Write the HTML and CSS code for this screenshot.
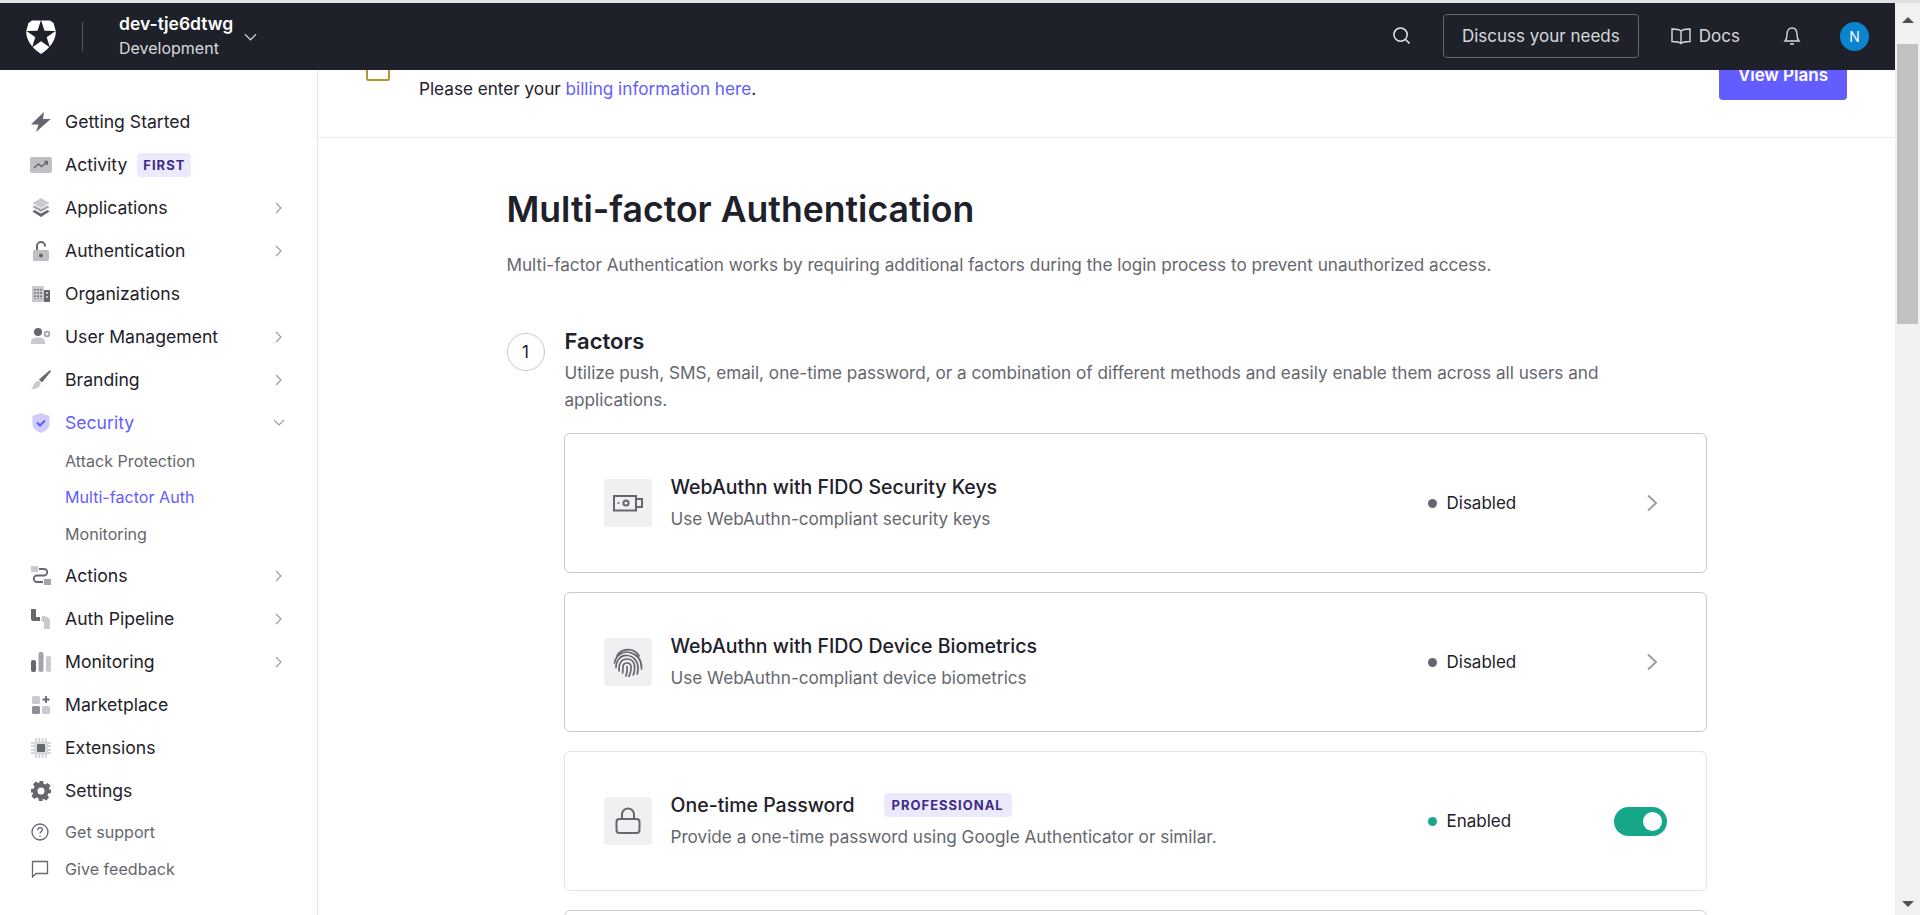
FILE: index.html
```html
<!DOCTYPE html>
<html lang="en">
<head>
<meta charset="utf-8">
<title>Multi-factor Authentication</title>
<link rel="stylesheet" href="styles.css">
</head>
<body>
<div class="top-strip"></div>
<div class="frame">
  <div class="app">
    <header class="topbar">
      <div class="tenant">
        <svg class="logo" viewBox="0 0 30 34" aria-hidden="true"><path fill="#fff" d="M6 .5H24L27.500 3l2 7C31 17 26 27 15 34 4 27-1 17 .5 10l2-7z"/><path fill="#1e212a" d="M15 0l3.500 10.800 11 .1-8.800 6.400 3.300 10.300L15 21.300l-9 6.300 3.300-10.300-8.800-6.400 11-.1z"/></svg>
        <span class="tenant-divider"></span>
        <div class="tenant-text">
          <div class="tenant-name">dev-tje6dtwg</div>
          <div class="tenant-env">Development</div>
        </div>
        <svg class="tenant-chevron" viewBox="0 0 14 8" aria-hidden="true"><path d="M1 1l6 6 6-6"/></svg>
      </div>
      <div class="top-actions">
        <svg class="search" viewBox="0 0 20 20" aria-hidden="true"><circle cx="9" cy="9" r="7"/><path d="M14 14l4.500 4.500"/></svg>
        <span class="discuss">Discuss your needs</span>
        <span class="docs">
          <svg class="book" viewBox="0 0 20 18" aria-hidden="true"><path d="M10 4C8.500 2.500 6 2 1 2v12.500c5 0 7.500.5 9 2 1.500-1.500 4-2 9-2V2c-5 0-7.500.5-9 2zM10 4v12.500"/></svg>
          Docs
        </span>
        <svg class="bell" viewBox="0 0 18 20" aria-hidden="true"><path d="M2 15c1.500-1.500 2-3 2-6.500C4 4.500 6 2 9 2s5 2.500 5 6.500c0 3.500.5 5 2 6.500zM7 18h4"/></svg>
        <span class="avatar">N</span>
      </div>
    </header>
    <div class="body-row">
      <nav class="sidebar">
        <a class="nav-row"><svg class="nav-icon" viewBox="0 0 20 20"><path fill="#65676e" d="M13 0L2 10.500l-2 2h7.500L5 20l13-11.500 2-1.500h-8z"/></svg><span>Getting Started</span></a>
        <a class="nav-row"><svg class="nav-icon wide" viewBox="0 0 22 16"><rect width="22" height="16" rx="2" fill="#bfc0c4"/><path d="M4 11l4.500-4 3 2.500L17 5M14 4.500h3.200V8" fill="none" stroke="#65676e" stroke-width="1.500"/></svg><span>Activity</span><b class="badge">FIRST</b></a>
        <a class="nav-row"><svg class="nav-icon" viewBox="0 0 20 20"><path fill="#c9cace" d="M10 0l8.500 5L10 10 1.500 5z"/><path fill="#a3a5aa" d="M3.500 7.500L10 11l6.500-3.500 2 1.500L10 14 1.500 9z"/><path fill="#65676e" d="M3.500 12L10 15.500l6.500-3.500 2 1.500L10 19l-8.500-5.500z"/></svg><span>Applications</span><svg class="caret" viewBox="0 0 8 12"><path d="M1 1l5 5-5 5"/></svg></a>
        <a class="nav-row"><svg class="nav-icon" viewBox="0 0 20 20"><path fill="none" stroke="#65676e" stroke-width="2" d="M6 9V5a4 4 0 0 1 8 0v.500"/><rect x="2" y="9" width="16" height="11" rx="1.500" fill="#bfc0c4"/><circle cx="10" cy="14.500" r="2" fill="#65676e"/></svg><span>Authentication</span><svg class="caret" viewBox="0 0 8 12"><path d="M1 1l5 5-5 5"/></svg></a>
        <a class="nav-row"><svg class="nav-icon" viewBox="0 0 20 20"><rect x="1" y="2" width="12" height="16" rx="1" fill="#c9cace"/><rect x="13" y="6" width="6" height="12" rx="1" fill="#65676e"/><path stroke="#65676e" stroke-width="1.600" stroke-dasharray="1.600 1.600" d="M4 5v10M7 5v10M10 5v10"/><path stroke="#d8d9dc" stroke-width="1.600" stroke-dasharray="2 2" d="M16 8v8"/></svg><span>Organizations</span></a>
        <a class="nav-row"><svg class="nav-icon" viewBox="0 0 20 20"><circle cx="7" cy="5" r="4" fill="#65676e"/><path fill="#c9cace" d="M0 17v-2c0-2.500 2.500-4.500 6-4.500h2c3.500 0 6 2 6 4.500v2z"/><circle cx="16" cy="7" r="2.300" fill="none" stroke="#a3a5aa" stroke-width="1.800"/></svg><span>User Management</span><svg class="caret" viewBox="0 0 8 12"><path d="M1 1l5 5-5 5"/></svg></a>
        <a class="nav-row"><svg class="nav-icon" viewBox="0 0 20 20"><path fill="#65676e" d="M19 0c1 1 1 1.500 .500 2L11 12.500 8 9.500z"/><path fill="#c9cace" d="M6.500 11c2-.5 3.500 1 3 3-.5 3-4 5-9.500 5 2-1.500 2-3 3-5 .5-1.500 2-2.500 3.500-3z"/></svg><span>Branding</span><svg class="caret" viewBox="0 0 8 12"><path d="M1 1l5 5-5 5"/></svg></a>
        <a class="nav-row active"><svg class="nav-icon" viewBox="0 0 20 20"><path fill="#cfcdfd" d="M10 0l8.500 3v8c0 4-4 7.500-8.500 9-4.500-1.500-8.500-5-8.500-9V3z"/><path fill="none" stroke="#635dff" stroke-width="2" d="M6 9.500l3 3 5-5"/></svg><span>Security</span><svg class="caret down" viewBox="0 0 12 8"><path d="M1 1l5 5 5-5"/></svg></a>
        <div class="subnav">
          <a class="sub-row">Attack Protection</a>
          <a class="sub-row current">Multi-factor Auth</a>
          <a class="sub-row">Monitoring</a>
        </div>
        <a class="nav-row"><svg class="nav-icon" viewBox="0 0 20 20"><rect width="7" height="6" fill="#c9cace"/><rect x="13" y="13" width="7" height="6" fill="#a3a5aa"/><path fill="none" stroke="#65676e" stroke-width="1.800" d="M8 3h5a3 3 0 0 1 0 6.500H6A3.200 3.200 0 0 0 6 16h6"/></svg><span>Actions</span><svg class="caret" viewBox="0 0 8 12"><path d="M1 1l5 5-5 5"/></svg></a>
        <a class="nav-row"><svg class="nav-icon" viewBox="0 0 20 20"><path fill="#65676e" d="M0 0h5v8h4v4H2a2 2 0 0 1-2-2z"/><path fill="#c9cace" d="M11 7c3 0 8 1 8 5v8h-6v-6c0-1-1-2-3-2z"/></svg><span>Auth Pipeline</span><svg class="caret" viewBox="0 0 8 12"><path d="M1 1l5 5-5 5"/></svg></a>
        <a class="nav-row"><svg class="nav-icon" viewBox="0 0 20 20"><rect y="8" width="5" height="12" rx="2" fill="#65676e"/><rect x="7.500" width="5" height="20" rx="2" fill="#a3a5aa"/><rect x="15" y="4" width="5" height="16" rx="2" fill="#c9cace"/></svg><span>Monitoring</span><svg class="caret" viewBox="0 0 8 12"><path d="M1 1l5 5-5 5"/></svg></a>
        <a class="nav-row"><svg class="nav-icon" viewBox="0 0 20 20"><rect x="1" y="1" width="8" height="8" rx="1.500" fill="#c9cace"/><rect x="1" y="11" width="8" height="8" rx="1.500" fill="#8d8f95"/><rect x="11" y="11" width="8" height="8" rx="1.500" fill="#c9cace"/><path stroke="#65676e" stroke-width="1.800" d="M15 1v7M11.500 4.500h7"/></svg><span>Marketplace</span></a>
        <a class="nav-row"><svg class="nav-icon" viewBox="0 0 20 20"><path stroke="#c9cace" stroke-width="1.500" d="M5 0v20M8.300 0v20M11.700 0v20M15 0v20M0 5h20M0 8.300h20M0 11.700h20M0 15h20"/><rect x="3" y="3" width="14" height="14" rx="2" fill="#d8d9dc"/><rect x="6" y="6" width="8" height="8" rx="1" fill="#65676e"/></svg><span>Extensions</span></a>
        <a class="nav-row"><svg class="nav-icon" viewBox="0 0 20 20"><path fill="#65676e" fill-rule="evenodd" d="M8 0h4l.6 2.800 1.700.7 2.400-1.500 2.800 2.800-1.500 2.400.7 1.700L20 8v4l-2.800.6-.7 1.700 1.500 2.400-2.800 2.800-2.400-1.500-1.700.7L12 20H8l-.6-2.800-1.700-.7-2.400 1.500-2.800-2.800 1.500-2.400-.7-1.700L0 12V8l2.800-.6.700-1.700L2 3.300 4.800.5l2.400 1.500 1.700-.7zM10 6.500a3.500 3.500 0 1 0 0 7 3.500 3.500 0 0 0 0-7z"/></svg><span>Settings</span></a>
        <div class="support">
          <a class="sup-row"><svg class="sup-icon" viewBox="0 0 18 18"><circle cx="9" cy="9" r="8"/><path d="M6.800 7c0-3 4.600-3 4.600-.2 0 1.800-2.400 1.800-2.400 3.700M9 12.400v1.300"/></svg>Get support</a>
          <a class="sup-row"><svg class="sup-icon" viewBox="0 0 18 18"><path d="M1.500 1.500h15v12H5l-3.500 3.500z"/></svg>Give feedback</a>
        </div>
      </nav>
      <main class="main">
        <div class="scroller">
          <section class="banner">
            <span class="banner-icon"></span>
            <p class="banner-text">Please enter your <a class="link">billing information here</a>.</p>
            <span class="view-plans">View Plans</span>
          </section>
          <div class="content">
            <h1 class="title">Multi-factor Authentication</h1>
            <p class="lead">Multi-factor Authentication works by requiring additional factors during the login process to prevent unauthorized access.</p>
            <div class="step">
              <span class="step-num">1</span>
              <div class="step-body">
                <h2 class="step-title">Factors</h2>
                <p class="step-desc">Utilize push, SMS, email, one-time password, or a combination of different methods and easily enable them across all users and applications.</p>
                <div class="cards">
                  <article class="card">
                    <span class="tile"><svg class="tile-svg" viewBox="0 0 30 30"><path d="M1 8h22v14.500H1zM23 11h6v8h-6"/><circle cx="13" cy="15" r="2.600"/><path d="M5.500 14.200v1.600"/></svg></span>
                    <div class="card-text"><div class="card-head"><span class="card-title">WebAuthn with FIDO Security Keys</span></div><div class="card-sub">Use WebAuthn-compliant security keys</div></div>
                    <div class="card-state"><span class="status"><i class="dot"></i>Disabled</span><svg class="go" viewBox="0 0 12 18"><path d="M2 1.500L10 9l-8 7.500"/></svg></div>
                  </article>
                  <article class="card">
                    <span class="tile"><svg class="tile-svg print" viewBox="0 0 30 30"><path d="M4 9C8 1 21 0 26 9"/><path d="M1.500 16C3 8 10 3.500 17 5.500 24 7.500 29 13 28.500 22"/><path d="M3 20.500C3 13 8 8 14 8.500c7 .5 11 6 11 13 0 2-.3 4-.8 5.500"/><path d="M6 24c-.5-7 2-12 8-12 6.500 0 8.500 6 7.500 11.500-.3 1.500-.8 3-1.300 4.500"/><path d="M9.500 26c.5-2 .5-4 .5-6 0-5 7.500-5.500 8-.5.300 3.500-.5 7-2 10"/><path d="M13 29c1-3 1.500-6 1-9.500"/></svg></span>
                    <div class="card-text"><div class="card-head"><span class="card-title">WebAuthn with FIDO Device Biometrics</span></div><div class="card-sub">Use WebAuthn-compliant device biometrics</div></div>
                    <div class="card-state"><span class="status"><i class="dot"></i>Disabled</span><svg class="go" viewBox="0 0 12 18"><path d="M2 1.500L10 9l-8 7.500"/></svg></div>
                  </article>
                  <article class="card soft">
                    <span class="tile"><svg class="tile-svg" viewBox="0 0 30 30"><rect x="3.500" y="13" width="23" height="14" rx="3"/><path d="M9 13V8.500a6 6 0 0 1 12 0V13"/></svg></span>
                    <div class="card-text"><div class="card-head"><span class="card-title">One-time Password</span><b class="badge pro">PROFESSIONAL</b></div><div class="card-sub">Provide a one-time password using Google Authenticator or similar.</div></div>
                    <div class="card-state"><span class="status"><i class="dot on"></i>Enabled</span><span class="toggle"><i class="knob"></i></span></div>
                  </article>
                  <article class="card stub"></article>
                </div>
              </div>
            </div>
          </div>
        </div>
      </main>
    </div>
  </div>
  <div class="scrollbar">
    <span class="arrow up"></span>
    <span class="thumb"></span>
    <span class="arrow dn"></span>
  </div>
</div>
</body>
</html>
```
FILE: styles.css
```css
* { box-sizing: border-box; }
html, body { margin: 0; height: 100%; overflow: hidden; }
body { font-family: Inter, "Liberation Sans", sans-serif; font-size: 17.150px; color: #1e212a; background: #fff; display: flex; flex-direction: column; }
p, h1, h2 { margin: 0; }
.top-strip { height: 3px; background: #e1e1e1; flex: none; }
.frame { flex: 1; display: flex; min-height: 0; }
.app { flex: 1; min-width: 0; display: flex; flex-direction: column; }

.topbar { height: 67px; flex: none; background: #1e212a; display: flex; align-items: center; justify-content: space-between; padding: 0 26px; position: relative; z-index: 2; }
.tenant { display: flex; align-items: center; }
.logo { width: 30px; height: 34px; }
.tenant-divider { width: 1px; height: 29px; background: #55575e; margin: 0 36px 0 26px; }
.tenant-name { color: #fff; font-weight: 600; font-size: 17.500px; line-height: 24px; }
.tenant-env { color: #d8d9dc; font-size: 16px; line-height: 25px; }
.tenant-chevron { width: 13px; height: 8px; margin-left: 11px; fill: none; stroke: #c9cace; stroke-width: 1.300; }
.top-actions { display: flex; align-items: center; }
.search { width: 19px; height: 19px; fill: none; stroke: #e6e6e8; stroke-width: 1.600; margin: 0 32px 2px 0; }
.discuss { height: 44px; width: 196px; border: 1px solid #66686f; border-radius: 4px; color: #d8d9dc; display: flex; align-items: center; justify-content: center; font-size: 17px; margin-bottom: 2px; }
.docs { display: flex; align-items: center; color: #d8d9dc; font-size: 17px; margin: 0 0 2px 32px; gap: 8px; }
.book { width: 20px; height: 18px; fill: none; stroke: #d8d9dc; stroke-width: 1.400; }
.bell { width: 18px; height: 20px; fill: none; stroke: #d8d9dc; stroke-width: 1.400; margin: 0 0 2px 43px; }
.avatar { width: 29px; height: 29px; border-radius: 50%; background: #0a84cf; color: #fff; display: flex; align-items: center; justify-content: center; font-size: 14px; margin-left: 39px; }

.body-row { flex: 1; min-height: 0; display: flex; }
.sidebar { width: 318px; flex: none; border-right: 1px solid #e3e4e6; padding: 30px 0 0 31px; display: flex; flex-direction: column; }
.nav-row { height: 43px; flex: none; display: flex; align-items: center; position: relative; font-size: 17.600px; color: #1e212a; font-weight: 400; }
.nav-icon { width: 20px; height: 20px; margin-right: 14px; flex: none; }
.nav-icon.wide { width: 22px; height: 16px; margin-left: -1px; margin-right: 13px; }
.caret { position: absolute; left: 244px; top: 16px; width: 8px; height: 12px; fill: none; stroke: #9c9ea3; stroke-width: 1.200; }
.caret.down { left: 242px; top: 18px; width: 12px; height: 8px; }
.active { color: #635dff; }
.badge { background: #ebe9fd; color: #3f2b86; border-radius: 4px; font-size: 13px; font-weight: 700; letter-spacing: 1px; }
.nav-row .badge { height: 24px; line-height: 24px; padding: 0 6px; margin-left: 10px; }
.subnav { margin: -1.500px 0 2px 34px; }
.sub-row { height: 36.500px; display: flex; align-items: center; font-size: 16.100px; color: #65676e; }
.sub-row.current { color: #635dff; }
.support { margin-top: 1px; }
.sup-row { height: 37px; display: flex; align-items: center; color: #65676e; font-size: 16.100px; }
.sup-icon { width: 18px; height: 18px; margin-right: 16px; fill: none; stroke: #65676e; stroke-width: 1.300; flex: none; }

.main { flex: 1; min-width: 0; overflow: hidden; }
.scroller { margin-top: -30px; }
.banner { height: 98px; border-bottom: 1px solid #ececee; display: flex; position: relative; padding: 0 48px 0 48px; align-items: flex-end; }
.banner-icon { width: 24px; height: 24px; border: 2px solid #b8962e; border-radius: 2px; position: absolute; left: 48px; top: 17px; }
.banner-text { margin: 0 0 36px 53px; line-height: 24px; }
.link { color: #635dff; }
.view-plans { width: 128px; height: 50px; margin: 0 0 37px auto; background: #635dff; color: #fff; border-radius: 4px; font-weight: 600; font-size: 17px; display: flex; align-items: center; justify-content: center; }

.content { width: 1200px; margin: 0 auto; padding-top: 48px; }
.title { font-size: 35.600px; line-height: 48px; font-weight: 600; }
.lead { color: #65676e; line-height: 24px; margin-top: 19px; }
.step { display: flex; margin-top: 50px; }
.step-num { width: 38px; height: 38px; flex: none; border: 1px solid #c9cace; border-radius: 50%; display: flex; align-items: center; justify-content: center; font-size: 17px; color: #1e212a; margin: 6px 19px 0 0; }
.step-body { flex: 1; min-width: 0; }
.step-title { font-size: 22px; line-height: 28px; font-weight: 600; margin-left: 1px; }
.step-desc { color: #65676e; line-height: 27px; margin: 4px 0 0 1px; max-width: 1080px; }
.cards { margin-top: 20px; display: flex; flex-direction: column; gap: 19px; }
.card { height: 140px; border: 1px solid #c9cace; border-radius: 6px; display: grid; grid-template-columns: 48px 1fr 239px; align-items: center; padding: 0 39px; }
.card.soft { border-color: #e3e4e6; }
.tile { width: 48px; height: 48px; background: #eff0f2; border-radius: 4px; display: flex; align-items: center; justify-content: center; }
.tile-svg { width: 30px; height: 30px; fill: none; stroke: #65676e; stroke-width: 2; }
.tile-svg.print { stroke-linecap: round; stroke-width: 1.700; }
.card-text { padding-left: 19px; }
.card-head { display: flex; align-items: center; height: 32px; }
.card-title { font-size: 19.500px; font-weight: 450; color: #1e212a; }
.badge.pro { margin-left: 29px; height: 24px; line-height: 24px; padding: 0 8px; }
.card-sub { color: #65676e; line-height: 32px; }
.card-state { display: flex; align-items: center; justify-content: space-between; }
.status { display: flex; align-items: center; font-size: 17px; }
.dot { width: 9px; height: 9px; border-radius: 50%; background: #65676e; margin-right: 10px; }
.dot.on { background: #16a688; }
.go { width: 12px; height: 18px; margin-right: 9px; fill: none; stroke: #9c9ea3; stroke-width: 2; }
.toggle { width: 53px; height: 29px; border-radius: 15px; background: #16a688; position: relative; }
.knob { position: absolute; right: 5px; top: 5px; width: 19px; height: 19px; border-radius: 50%; background: #fff; }

.scrollbar { width: 25px; flex: none; background: #f1f1f1; display: flex; flex-direction: column; align-items: center; }
.thumb { width: 21px; height: 280px; background: #c1c1c1; margin-top: 21px; }
.arrow { width: 0; height: 0; border-left: 6px solid transparent; border-right: 6px solid transparent; }
.arrow.up { border-bottom: 6px solid #505050; margin-top: 14px; }
.arrow.dn { border-top: 6px solid #505050; margin-top: auto; margin-bottom: 8px; }
```
